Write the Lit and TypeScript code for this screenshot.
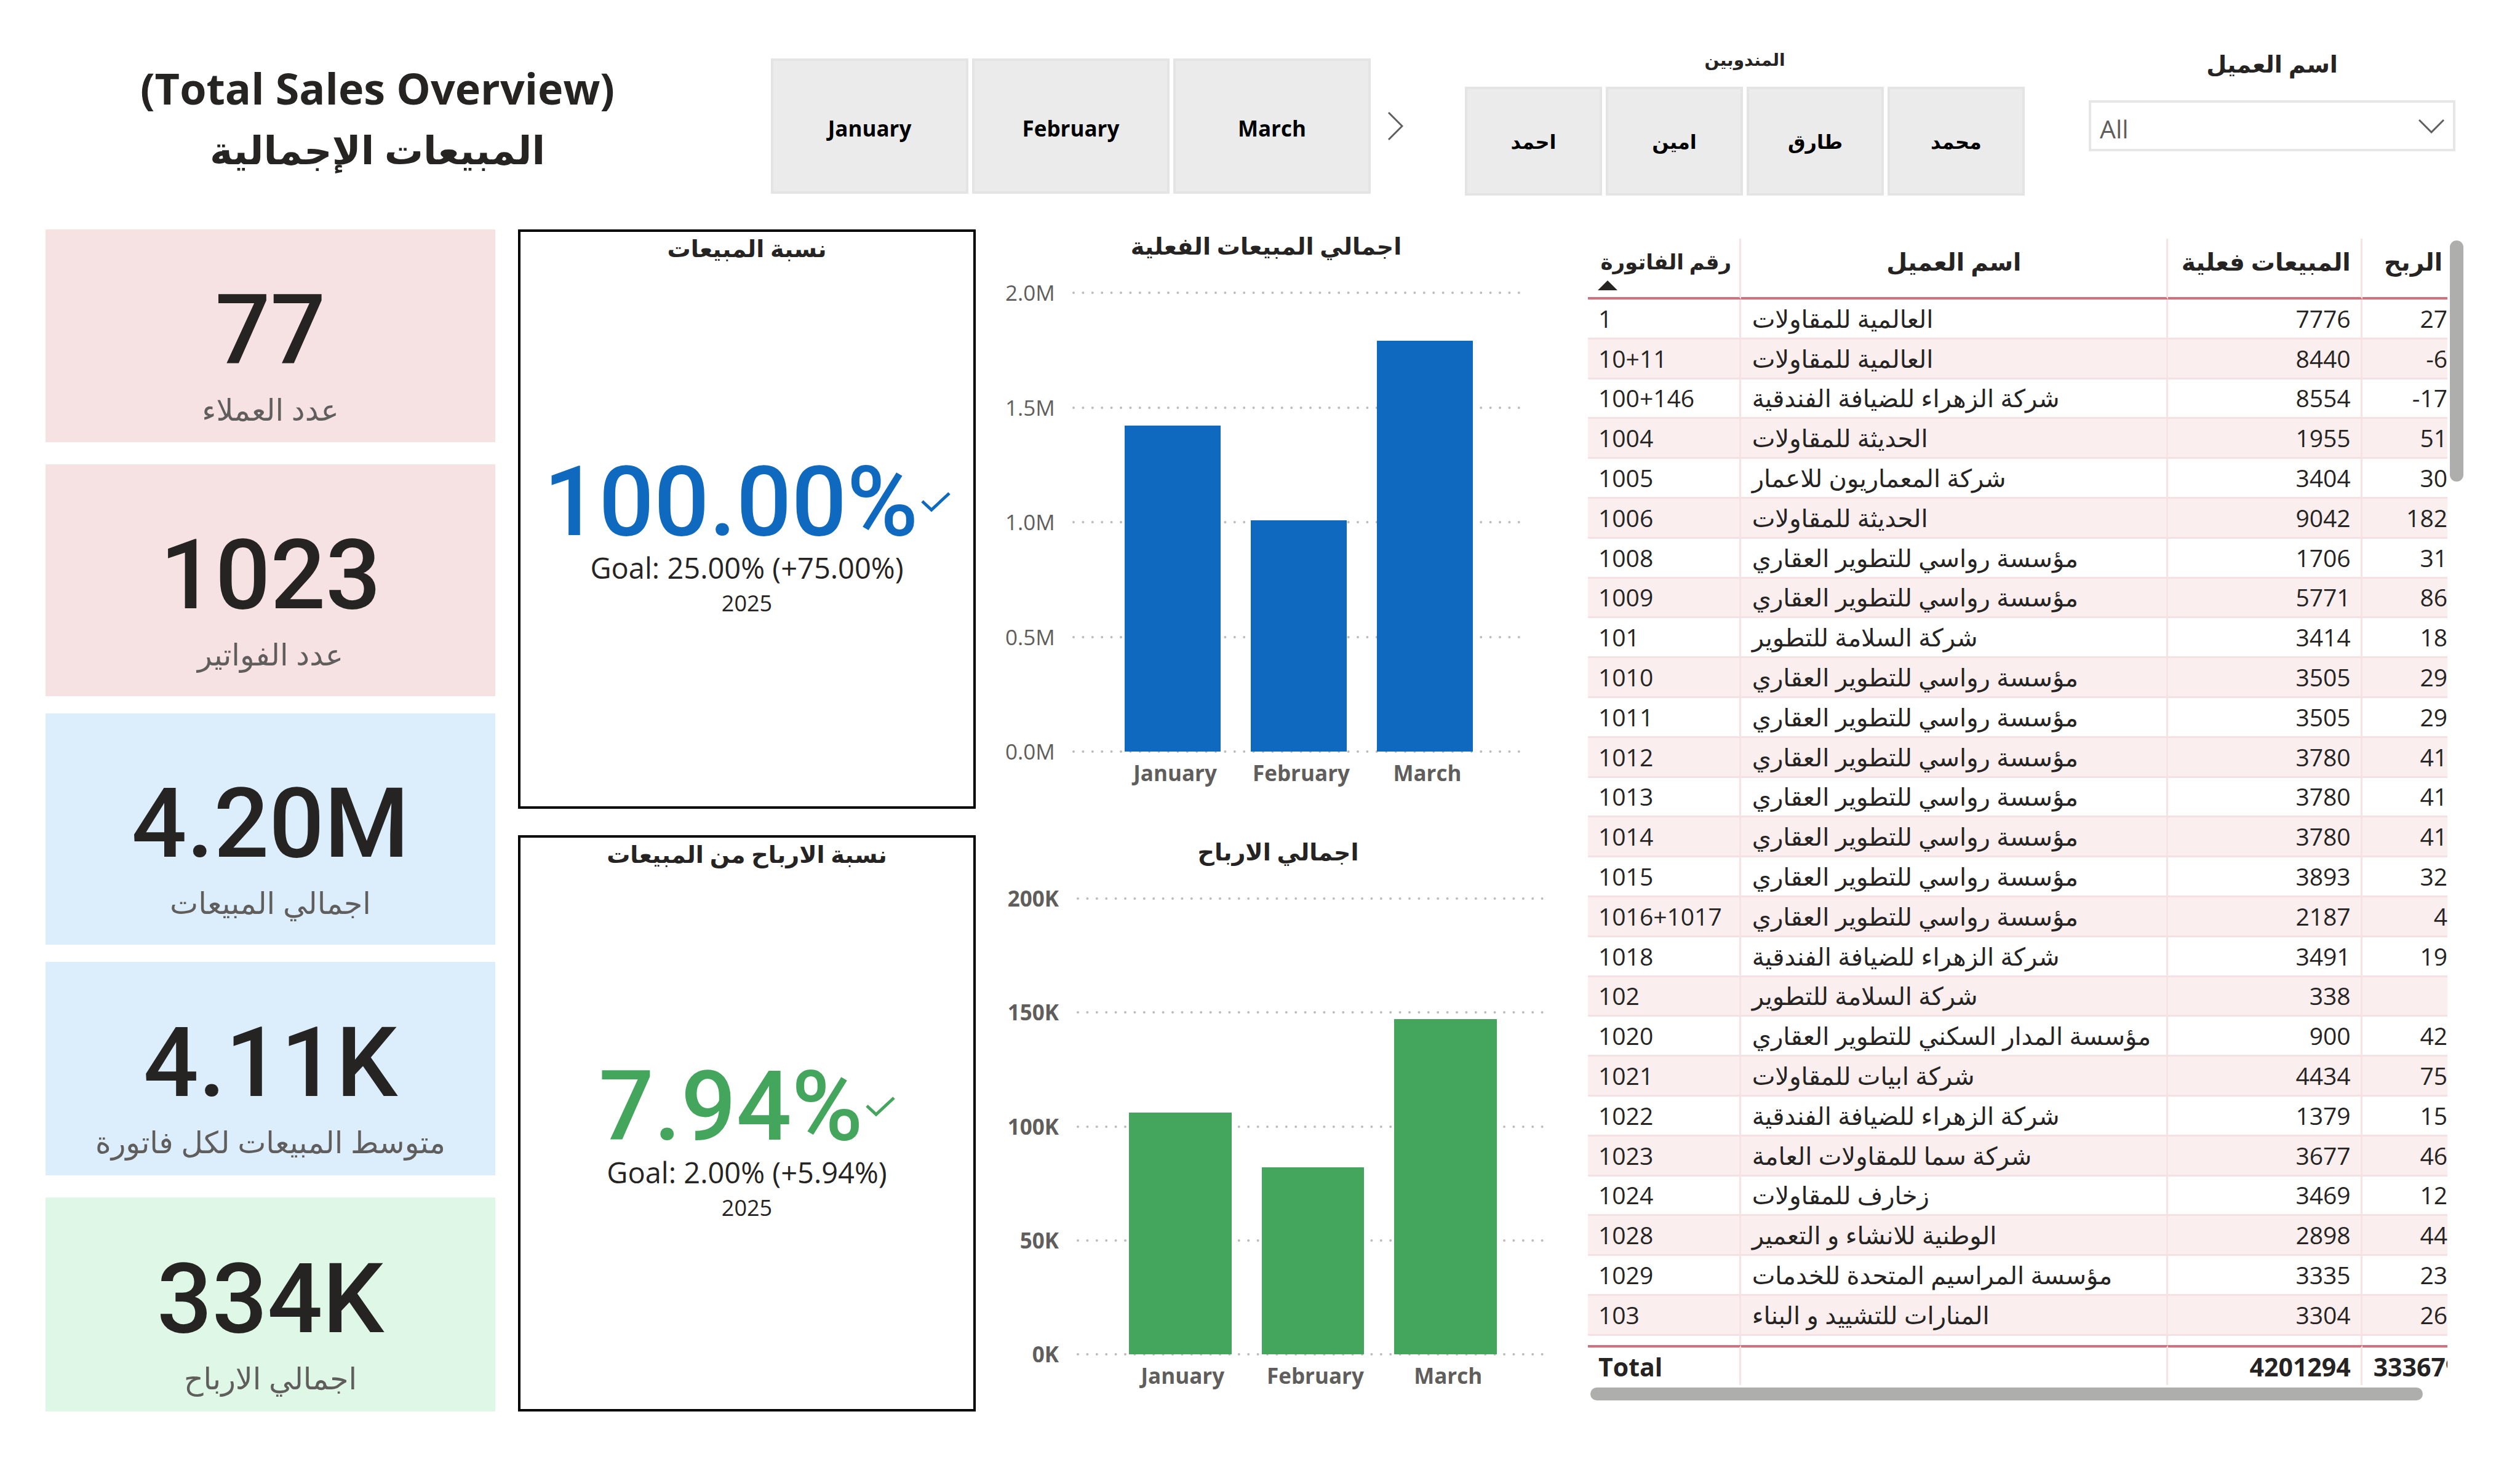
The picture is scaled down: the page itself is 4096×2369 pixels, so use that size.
import { LitElement, html, css, svg } from "lit";
import { customElement, property, state } from "lit/decorators.js";

type Bar = { month: string; value: number };
type Row = [string, string, string, string];

const ROWS: Row[] = [
  ["1", "العالمية للمقاولات", "7776", "27"],
  ["10+11", "العالمية للمقاولات", "8440", "-6"],
  ["100+146", "شركة الزهراء للضيافة الفندقية", "8554", "-17"],
  ["1004", "الحديثة للمقاولات", "1955", "51"],
  ["1005", "شركة المعماريون للاعمار", "3404", "30"],
  ["1006", "الحديثة للمقاولات", "9042", "182"],
  ["1008", "مؤسسة رواسي للتطوير العقاري", "1706", "31"],
  ["1009", "مؤسسة رواسي للتطوير العقاري", "5771", "86"],
  ["101", "شركة السلامة للتطوير", "3414", "18"],
  ["1010", "مؤسسة رواسي للتطوير العقاري", "3505", "29"],
  ["1011", "مؤسسة رواسي للتطوير العقاري", "3505", "29"],
  ["1012", "مؤسسة رواسي للتطوير العقاري", "3780", "41"],
  ["1013", "مؤسسة رواسي للتطوير العقاري", "3780", "41"],
  ["1014", "مؤسسة رواسي للتطوير العقاري", "3780", "41"],
  ["1015", "مؤسسة رواسي للتطوير العقاري", "3893", "32"],
  ["1016+1017", "مؤسسة رواسي للتطوير العقاري", "2187", "4"],
  ["1018", "شركة الزهراء للضيافة الفندقية", "3491", "19"],
  ["102", "شركة السلامة للتطوير", "338", ""],
  ["1020", "مؤسسة المدار السكني للتطوير العقاري", "900", "42"],
  ["1021", "شركة ابيات للمقاولات", "4434", "75"],
  ["1022", "شركة الزهراء للضيافة الفندقية", "1379", "15"],
  ["1023", "شركة سما للمقاولات العامة", "3677", "46"],
  ["1024", "زخارف للمقاولات", "3469", "12"],
  ["1028", "الوطنية للانشاء و التعمير", "2898", "44"],
  ["1029", "مؤسسة المراسيم المتحدة للخدمات", "3335", "23"],
  ["103", "المنارات للتشييد و البناء", "3304", "26"],
];

const CARDS = [
  { value: "77", label: "عدد العملاء", tone: "pink spaced" },
  { value: "1023", label: "عدد الفواتير", tone: "pink" },
  { value: "4.20M", label: "اجمالي المبيعات", tone: "blue" },
  { value: "4.11K", label: "متوسط المبيعات لكل فاتورة", tone: "blue spaced" },
  { value: "334K", label: "اجمالي الارباح", tone: "green" },
];

@customElement("kpi-box")
class KpiBox extends LitElement {
  @property() heading = "";
  @property() value = "";
  @property() goal = "";
  @property() year = "";

  static styles = css`
    :host {
      display: flex;
      flex-direction: column;
      box-sizing: border-box;
      border: 4px solid #000;
      color: #252423;
      text-align: center;
      min-width: 0;
    }
    .heading {
      margin: 0;
      font-size: 38px;
      line-height: 52px;
      font-weight: 700;
    }
    .body {
      flex: 1;
      display: flex;
      flex-direction: column;
      justify-content: center;
      padding-top: 8px;
    }
    .value {
      display: flex;
      justify-content: center;
      align-items: center;
      gap: 4px;
      font-family: Roboto, "Liberation Sans", sans-serif;
      font-size: 158px;
      font-weight: 500;
      line-height: 150px;
      color: var(--kpi-color);
    }
    .check {
      width: 48px;
      height: 36px;
      fill: none;
      stroke: currentColor;
      stroke-width: 5;
    }
    .goal {
      font-size: 47px;
      line-height: 64px;
    }
    .year {
      font-size: 36px;
      line-height: 52px;
    }
  `;

  render() {
    return html`
      <h2 class="heading" lang="ar">${this.heading}</h2>
      <div class="body">
        <div class="value">
          <span>${this.value}</span>
          <svg class="check" viewBox="0 0 48 36" aria-hidden="true"><path d="M2 17 L17 31 L46 4" /></svg>
        </div>
        <div class="goal">${this.goal}</div>
        <div class="year">${this.year}</div>
      </div>
    `;
  }
}

@customElement("column-chart")
class ColumnChart extends LitElement {
  @property() heading = "";
  @property({ attribute: false }) ticks: string[] = [];
  @property({ attribute: false }) bars: Bar[] = [];
  @property({ type: Number }) max = 1;

  static styles = css`
    :host {
      display: flex;
      flex-direction: column;
      box-sizing: border-box;
      padding: 0 var(--chart-end) 46px 11px;
      min-width: 0;
      color: #605e5c;
      font-size: 35px;
    }
    .heading {
      margin: 0 0 29px -11px;
      font-size: 38px;
      line-height: 52px;
      font-weight: 700;
      text-align: center;
      color: #252423;
    }
    .chart {
      flex: 1;
      display: grid;
      grid-template-columns: var(--axis-width) 1fr;
      grid-template-rows: 1fr 25px;
      column-gap: 29px;
      padding-right: 21px;
    }
    .axis,
    .lines {
      display: flex;
      flex-direction: column;
      justify-content: space-between;
      line-height: 44px;
    }
    .axis {
      text-align: right;
      font-weight: var(--axis-weight, 400);
    }
    .lines,
    .bars {
      grid-row: 1;
      grid-column: 2;
    }
    .line {
      display: block;
      width: 100%;
      height: 44px;
      stroke: #bebcba;
      stroke-width: 4;
      stroke-linecap: round;
      stroke-dasharray: 0 15.4;
    }
    .bars,
    .months {
      display: grid;
      grid-template-columns: repeat(3, 1fr);
      column-gap: 49px;
      padding: 0 78px 0 85px;
    }
    .bars {
      align-items: end;
      margin: 22px 0;
    }
    .bar {
      background: var(--bar-color);
    }
    .months {
      grid-column: 2;
      font-weight: 700;
      line-height: 25px;
      padding: 0 74px 0 89px;
    }
    .month {
      display: flex;
      justify-content: center;
      min-width: 0;
    }
  `;

  render() {
    return html`
      <h2 class="heading" lang="ar">${this.heading}</h2>
      <div class="chart">
        <div class="axis">${this.ticks.map((t) => html`<span>${t}</span>`)}</div>
        <div class="lines">
          ${this.ticks.map(
            () => html`<svg class="line" aria-hidden="true">${svg`<line x1="2" y1="22" x2="100%" y2="22" />`}</svg>`
          )}
        </div>
        <div class="bars">
          ${this.bars.map((b) => html`<div class="bar" style="height:${(b.value / this.max) * 100}%"></div>`)}
        </div>
        <div class="months">${this.bars.map((b) => html`<span class="month">${b.month}</span>`)}</div>
      </div>
    `;
  }
}

@customElement("app-root")
class AppRoot extends LitElement {
  @state() private months = ["January", "February", "March"];
  @state() private reps = ["احمد", "امين", "طارق", "محمد"];

  static styles = css`
    :host {
      display: grid;
      grid-template-rows: 373px 1fr;
      box-sizing: border-box;
      min-height: 100vh;
      padding-bottom: 74px;
      background: #fff;
      color: #252423;
      font-family: "Open Sans", "DejaVu Sans", sans-serif;
    }
    .top {
      display: grid;
      grid-template-columns: 1079fr 1028fr 910fr 600fr;
      column-gap: 100px;
      align-items: start;
      padding: 0 105px 0 74px;
    }
    .title {
      margin: 0;
      padding-top: 94px;
      text-align: center;
      font-size: 70px;
      line-height: 99px;
      font-weight: 700;
    }
    .title span {
      display: block;
    }
    .title .title-ar {
      font-size: 63px;
    }
    .months {
      display: flex;
      align-items: center;
      gap: 27px;
      padding-top: 95px;
    }
    .months .tile {
      padding-top: 8px;
    }
    .tiles {
      flex: 1;
      display: grid;
      grid-auto-flow: column;
      grid-auto-columns: 1fr;
      gap: 6px;
    }
    .tile {
      box-sizing: border-box;
      height: 220px;
      padding: 0;
      border: 4px solid #e4e4e4;
      background: #ebebeb;
      color: #000;
      font: 700 35px/44px "Open Sans", "DejaVu Sans", sans-serif;
    }
    .rep .tile {
      height: 177px;
      font-size: 32px;
    }
    .next {
      padding: 0;
      border: 0;
      background: none;
      display: flex;
    }
    .next svg {
      width: 26px;
      height: 48px;
    }
    .stroke {
      fill: none;
      stroke: #605e5c;
      stroke-width: 3;
    }
    .rep,
    .customer {
      display: flex;
      flex-direction: column;
    }
    .rep-title {
      margin: 0;
      padding-top: 71px;
      text-align: center;
      font-size: 28px;
      line-height: 50px;
      font-weight: 700;
      margin-bottom: 20px;
    }
    .customer {
      padding-left: 4px;
    }
    .customer-title {
      padding-top: 73px;
      text-align: center;
      font-size: 38px;
      line-height: 60px;
      font-weight: 700;
      margin-bottom: 30px;
    }
    .field {
      display: grid;
      align-items: center;
    }
    .select {
      grid-area: 1 / 1;
      appearance: none;
      box-sizing: border-box;
      width: 100%;
      height: 83px;
      padding: 8px 60px 0 14px;
      border: 4px solid #e6e6e6;
      border-radius: 0;
      background: #fff;
      color: #605e5c;
      font: 400 41px/60px "Open Sans", "DejaVu Sans", sans-serif;
    }
    .field svg {
      grid-area: 1 / 1;
      justify-self: end;
      width: 42px;
      height: 24px;
      margin-right: 18px;
      pointer-events: none;
    }
    .main {
      display: grid;
      grid-template-columns: 731fr 744fr 921fr 1423fr;
      column-gap: 37px;
      padding: 0 92px 0 74px;
    }
    .cards {
      display: grid;
      grid-template-rows: 354fr 376fr 376fr 354fr 348fr;
      row-gap: 28px;
    }
    .card {
      display: flex;
      flex-direction: column;
      justify-content: center;
      text-align: center;
      padding-top: 58px;
    }
    .spaced {
      margin-bottom: 8px;
    }
    .pink {
      background: #f6e2e3;
    }
    .blue {
      background: #dcedfb;
    }
    .green {
      background: #dff7e6;
    }
    .card-value {
      font-family: Roboto, "Liberation Sans", sans-serif;
      font-size: 158px;
      font-weight: 500;
      line-height: 164px;
    }
    .card-label {
      margin-top: 16px;
      font-size: 49px;
      line-height: 60px;
      color: #605e5c;
    }
    .pair {
      display: grid;
      grid-template-rows: 942fr 937fr;
      row-gap: 43px;
      min-width: 0;
    }
    .sales {
      --kpi-color: #0f6abf;
      --bar-color: #0f6abf;
      --axis-width: 80px;
      --chart-end: 51px;
    }
    .profit {
      --kpi-color: #44a55c;
      --bar-color: #44a55c;
      --axis-width: 87px;
      --axis-weight: 700;
      --chart-end: 12px;
    }
    .grid {
      display: grid;
      grid-template-columns: 1fr 22px;
      grid-template-rows: 1fr 21px;
      gap: 4px;
      padding: 15px 0 18px;
      min-width: 0;
    }
    .scroller {
      overflow: hidden;
      min-width: 0;
    }
    .table {
      width: 100%;
      height: 100%;
      table-layout: fixed;
      border-collapse: separate;
      border-spacing: 0;
      font-size: 39px;
      line-height: 54px;
    }
    .c1 {
      width: 17.8%;
    }
    .c2 {
      width: 49.7%;
    }
    .c3 {
      width: 22.6%;
    }
    .table th,
    .table td {
      padding: 0 16px 0 17px;
      overflow: hidden;
      white-space: nowrap;
      text-align: left;
      border-right: 3px solid #f7e3e4;
    }
    .table th:last-child,
    .table td:last-child {
      border-right: 0;
      padding-right: 0;
    }
    .table .num {
      text-align: right;
    }
    .head {
      height: 99px;
    }
    .table .head th {
      box-sizing: border-box;
      height: 99px;
      border-bottom: 4px solid #d46f7c;
      vertical-align: bottom;
      text-align: center;
    }
    .table .head th:first-child {
      padding: 0 8px 0 16px;
    }
    .table .head .num {
      text-align: right;
    }
    .table .head th:last-child {
      padding-right: 8px;
    }
    .head-label {
      display: block;
      font-size: 39px;
      margin-bottom: 4px;
    }
    .head-label.compact {
      font-size: 34px;
    }
    .sort {
      display: block;
      width: 32px;
      height: 16px;
      margin-bottom: 11px;
      fill: #252423;
    }
    .sort.off {
      visibility: hidden;
    }
    .body td {
      border-bottom: 3px solid #f5e1e3;
    }
    .body tr:nth-child(even) td {
      background: #faeeee;
    }
    .table .body .name {
      padding-left: 18px;
      font-size: 40px;
    }
    .foot .spacer td {
      height: 15px;
    }
    .table .total th,
    .table .total td {
      box-sizing: border-box;
      height: 65px;
      border-top: 4px solid #d46f7c;
      font-size: 41px;
      font-weight: 700;
    }
    .table .total td:last-child {
      padding-left: 18px;
    }
    .thumb-y {
      height: 392px;
      margin-top: 3px;
      border-radius: 11px;
      background: #aeaeac;
    }
    .thumb-x {
      margin: 0 40px 0 4px;
      border-radius: 11px;
      background: #aeaeac;
    }
  `;

  private tile(text: string) {
    return html`<button class="tile" type="button">${text}</button>`;
  }

  render() {
    return html`
      <header class="top">
        <h1 class="title"><span>(Total Sales Overview)</span><span class="title-ar" lang="ar">المبيعات الإجمالية</span></h1>
        <div class="months">
          <div class="tiles">${this.months.map((m) => this.tile(m))}</div>
          <button class="next" type="button" aria-label="Next months">
            <svg viewBox="0 0 26 48" aria-hidden="true"><path class="stroke" d="M2 2 L24 24 L2 46" /></svg>
          </button>
        </div>
        <div class="rep" lang="ar">
          <h2 class="rep-title">المندوبين</h2>
          <div class="tiles">${this.reps.map((r) => this.tile(r))}</div>
        </div>
        <div class="customer">
          <label class="customer-title" for="customer" lang="ar">اسم العميل</label>
          <div class="field">
            <select class="select" id="customer">
              <option>All</option>
            </select>
            <svg viewBox="0 0 42 24" aria-hidden="true"><path class="stroke" d="M1 2 L21 22 L41 2" /></svg>
          </div>
        </div>
      </header>

      <main class="main">
        <section class="cards">
          ${CARDS.map(
            (c) => html`<div class="card ${c.tone}">
              <div class="card-value">${c.value}</div>
              <div class="card-label" lang="ar">${c.label}</div>
            </div>`
          )}
        </section>

        <section class="pair">
          <kpi-box class="sales" heading="نسبة المبيعات" value="100.00%" goal="Goal: 25.00% (+75.00%)" year="2025"></kpi-box>
          <kpi-box class="profit" heading="نسبة الارباح من المبيعات" value="7.94%" goal="Goal: 2.00% (+5.94%)" year="2025"></kpi-box>
        </section>

        <section class="pair">
          <column-chart
            class="sales"
            heading="اجمالي المبيعات الفعلية"
            .max=${2}
            .ticks=${["2.0M", "1.5M", "1.0M", "0.5M", "0.0M"]}
            .bars=${[
              { month: "January", value: 1.42 },
              { month: "February", value: 1.008 },
              { month: "March", value: 1.79 },
            ]}
          ></column-chart>
          <column-chart
            class="profit"
            heading="اجمالي الارباح"
            .max=${200}
            .ticks=${["200K", "150K", "100K", "50K", "0K"]}
            .bars=${[
              { month: "January", value: 106 },
              { month: "February", value: 82.1 },
              { month: "March", value: 147.2 },
            ]}
          ></column-chart>
        </section>

        <section class="grid">
          <div class="scroller">
            <table class="table">
              <colgroup>
                <col class="c1" />
                <col class="c2" />
                <col class="c3" />
                <col />
              </colgroup>
              <thead>
                <tr class="head" lang="ar">
                  <th scope="col" aria-sort="ascending">
                    <span class="head-label compact">رقم الفاتورة</span>
                    <svg class="sort" viewBox="0 0 32 16" aria-hidden="true"><path d="M16 0 L32 16 H0 Z" /></svg>
                  </th>
                  ${["اسم العميل", "المبيعات فعلية", "الربح"].map(
                    (h, i) => html`<th scope="col" class=${i ? "num" : ""}>
                      <span class="head-label">${h}</span><svg class="sort off" aria-hidden="true"></svg>
                    </th>`
                  )}
                </tr>
              </thead>
              <tbody class="body">
                ${ROWS.map(
                  ([id, name, sales, profit]) => html`<tr>
                    <td>${id}</td>
                    <td class="name" lang="ar">${name}</td>
                    <td class="num">${sales}</td>
                    <td class="num">${profit}</td>
                  </tr>`
                )}
              </tbody>
              <tfoot class="foot">
                <tr class="spacer" aria-hidden="true">
                  <td></td>
                  <td></td>
                  <td></td>
                  <td></td>
                </tr>
                <tr class="total">
                  <th scope="row">Total</th>
                  <td></td>
                  <td class="num">4201294</td>
                  <td>333679</td>
                </tr>
              </tfoot>
            </table>
          </div>
          <div class="thumb-y"></div>
          <div class="thumb-x"></div>
        </section>
      </main>
    `;
  }
}
